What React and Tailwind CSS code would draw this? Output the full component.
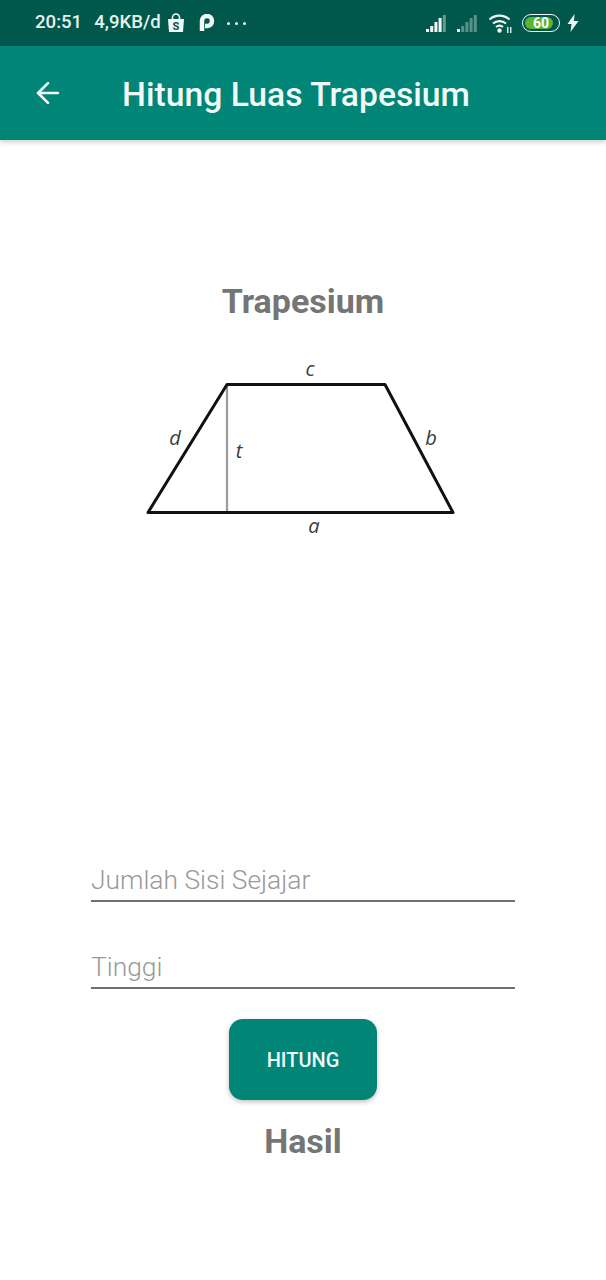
import { ArrowLeft } from 'lucide-react'

function SignalBars({ dim }) {
  const heights = [3, 6, 10, 14, 17]
  return (
    <svg width="22" height="18" viewBox="0 0 22 18">
      {heights.map((h, i) => (
        <rect
          key={i}
          x={i * 4.2}
          y={18 - h}
          width="3"
          height={h}
          fill="#fff"
          opacity={dim ? (i === 0 ? 0.9 : 0.35) : i === 4 ? 0.4 : 0.95}
        />
      ))}
    </svg>
  )
}

function StatusBar() {
  return (
    <div className="h-[46px] bg-[#00574b] flex items-center pl-[35px] pr-[27px] pt-[13px] pb-[13px] text-[#e6f1ef] text-[18.6px] font-medium">
      <span>20:51</span>
      <span className="ml-[12px]">4,9KB/d</span>
      {/* shopee bag */}
      <svg className="ml-[6px]" width="18" height="20" viewBox="0 0 18 20">
        <path d="M1 6h16l-1 13H2z" fill="#f2f6f5" />
        <path d="M5.500 6V4.500a3.500 3.500 0 0 1 7 0V6" fill="none" stroke="#f2f6f5" strokeWidth="1.600" />
        <text x="9" y="17" textAnchor="middle" fontSize="11" fontWeight="700" fill="#00574b">S</text>
      </svg>
      {/* p logo */}
      <svg className="ml-[14px]" width="16" height="18" viewBox="0 0 16 18">
        <path d="M3 17V7a5 5 0 1 1 5 5H6" fill="none" stroke="#f2f6f5" strokeWidth="4.500" />
      </svg>
      <div className="ml-[12px] flex gap-[5px]">
        <span className="w-[3px] h-[3px] rounded-full bg-[#e6f1ef]" />
        <span className="w-[3px] h-[3px] rounded-full bg-[#e6f1ef]" />
        <span className="w-[3px] h-[3px] rounded-full bg-[#e6f1ef]" />
      </div>
      <div className="ml-auto flex items-center">
        <SignalBars />
        <div className="ml-[9px]">
          <SignalBars dim />
        </div>
        <svg className="ml-[9px]" width="26" height="22" viewBox="0 0 26 22">
          <path d="M1.500 7.500a15 15 0 0 1 20 0M5 11.500a10 10 0 0 1 13 0M8 15a5.500 5.500 0 0 1 7 0" fill="none" stroke="#f2f6f5" strokeWidth="2.200" />
          <circle cx="11.500" cy="18.500" r="2.200" fill="#f2f6f5" />
          <rect x="19" y="15" width="1.500" height="6" fill="#d5e5e2" />
          <rect x="22" y="15" width="1.500" height="6" fill="#d5e5e2" />
        </svg>
        <div className="ml-[8px] w-[38px] h-[18px] rounded-full border-[1.5px] border-[#f2f6f5] p-[2px] relative overflow-hidden flex items-center justify-center">
          <div className="absolute left-[2px] top-[2px] bottom-[2px] w-[28px] rounded-full bg-[#5cb531]" />
          <span className="relative text-[14px] leading-none font-bold text-white">60</span>
        </div>
        <svg className="ml-[7px]" width="12" height="18" viewBox="0 0 12 18">
          <path d="M7.500 0 0.500 10h4L3.500 18l8-11H7z" fill="#f2f6f5" />
        </svg>
      </div>
    </div>
  )
}

function Trapezoid() {
  return (
    <svg width="340" height="190" viewBox="0 0 340 190" className="block">
      <line x1="97" y1="36" x2="97" y2="162" stroke="#9a9a9a" strokeWidth="2.200" />
      <path d="M18 162.500 L97 34.500 L255 34.500 L323 162.500 Z" fill="none" stroke="#111" strokeWidth="3" strokeLinejoin="round" />
      <g fontFamily="'Open Sans', sans-serif" fontStyle="italic" fontSize="20" fill="#3a3a3a">
        <text x="180" y="26" textAnchor="middle">c</text>
        <text x="45" y="95" textAnchor="middle">d</text>
        <text x="301" y="95" textAnchor="middle">b</text>
        <text x="109" y="108" textAnchor="middle">t</text>
        <text x="184" y="183" textAnchor="middle">a</text>
      </g>
    </svg>
  )
}

function Field({ label }) {
  return (
    <div className="w-[424px] h-[41px] border-b-2 border-[#6f6f6f] text-[26.4px] leading-[38px] text-[#999999] font-light">
      {label}
    </div>
  )
}

export default function App() {
  return (
    <div className="w-[606px] h-[1280px] bg-white overflow-hidden font-['Roboto',sans-serif]">
      <StatusBar />
      <div className="h-[94px] bg-[#008577] flex items-center pl-[31px] shadow-[0_2px_5px_rgba(0,0,0,0.2)] relative">
        <ArrowLeft className="text-[#f1f9f8]" size={34} strokeWidth={1.9} />
        <h1 className="ml-[57px] pt-[5px] text-[33.7px] font-medium text-[#f1f9f8]">Hitung Luas Trapesium</h1>
      </div>

      <div className="flex flex-col items-center">
        <h2 className="mt-[141px] text-[34px] leading-[40px] font-bold text-[#757575]">Trapesium</h2>
        <div className="mt-[29px] mr-[6px]">
          <Trapezoid />
        </div>

        <div className="mt-[321px]">
          <Field label="Jumlah Sisi Sejajar" />
        </div>
        <div className="mt-[46px]">
          <Field label="Tinggi" />
        </div>

        <button className="mt-[30px] w-[148px] h-[81px] rounded-[14px] bg-[#008577] text-[#f1f9f8] text-[20px] font-medium shadow-[0_2px_5px_rgba(0,0,0,0.25)]">
          HITUNG
        </button>
        <h2 className="mt-[21px] text-[34px] leading-[40px] font-bold text-[#757575]">Hasil</h2>
      </div>
    </div>
  )
}
